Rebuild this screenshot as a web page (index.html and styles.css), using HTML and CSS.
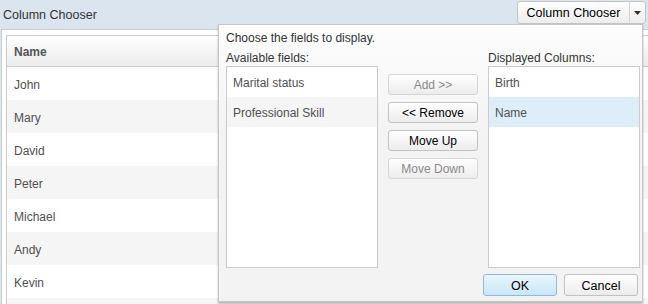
FILE: index.html
```html
<!DOCTYPE html>
<html>
<head>
    <title>Column Chooser</title>
    <link rel="stylesheet" href="styles.css">
</head>
<body>
    <div class="toolbar">
        <span class="toolbar-title">Column Chooser</span>
        <div class="split-btn">
            <span class="split-main">Column Chooser</span>
            <span class="split-arrow">
                <svg width="7" height="4" viewBox="0 0 7 4"><path d="M0 0h7L3.5 4z" fill="#333"></path></svg>
            </span>
        </div>
    </div>
    <div class="content">
        <div class="grid">
            <div class="grid-header">Name</div>
            <div class="grid-row">John</div>
            <div class="grid-row alt">Mary</div>
            <div class="grid-row">David</div>
            <div class="grid-row alt">Peter</div>
            <div class="grid-row">Michael</div>
            <div class="grid-row alt">Andy</div>
            <div class="grid-row">Kevin</div>
            <div class="grid-row alt"></div>
        </div>
    </div>

    <div class="chooser">
        <div class="chooser-intro">Choose the fields to display.</div>
        <div class="chooser-body">
            <div class="chooser-col">
                <div class="chooser-label">Available fields:</div>
                <div class="field-list">
                    <div class="field-item">Marital status</div>
                    <div class="field-item alt">Professional Skill</div>
                </div>
            </div>
            <div class="chooser-actions">
                <button class="btn" disabled>Add &gt;&gt;</button>
                <button class="btn">&lt;&lt; Remove</button>
                <button class="btn">Move Up</button>
                <button class="btn" disabled>Move Down</button>
            </div>
            <div class="chooser-col">
                <div class="chooser-label">Displayed Columns:</div>
                <div class="field-list">
                    <div class="field-item">Birth</div>
                    <div class="field-item selected">Name</div>
                </div>
            </div>
        </div>
        <div class="chooser-footer">
            <button class="btn dialog-btn primary">OK</button>
            <button class="btn dialog-btn">Cancel</button>
        </div>
    </div>
</body>
</html>
```

FILE: styles.css
```css
:root {
    --bar-color: #dae5f0;
    --border-color: #cccccc;
    --alt-row: #f5f5f5;
    --text-color: #333333;
    --cell-text: #505050;
    --disabled-text: #8a8a8a;
    --selected-bg: #ddeef9;
}
* {
    box-sizing: border-box;
}
body {
    margin: 0;
    font-family: "Liberation Sans", Arial, sans-serif;
    font-size: 12px;
    color: var(--text-color);
    background-color: var(--bar-color);
    height: 304px;
    overflow: hidden;
    position: relative;
}
.toolbar {
    height: 29px;
    display: flex;
    justify-content: space-between;
    padding: 0 2px 0 2px;
}
.toolbar-title {
    font-size: 12.5px;
    line-height: 31px;
    padding-left: 1px;
}
.split-btn {
    margin-top: 1px;
    height: 23px;
    display: flex;
    border: 1px solid #c4c4c4;
    border-radius: 3px;
    background: linear-gradient(#ffffff, #ededed);
    font-size: 12.5px;
    color: #000;
}
.split-main {
    width: 112px;
    line-height: 22px;
    text-align: center;
    border-right: 1px solid #d2d2d2;
}
.split-arrow {
    width: 15px;
    display: flex;
    align-items: center;
    justify-content: center;
}
.content {
    margin-left: 1px;
    height: 275px;
    overflow: hidden;
    border-top: 1px solid #c9cfd6;
    border-left: 1px solid #c9cfd6;
    background-color: #ffffff;
    padding: 5px 0 0 4px;
}
.grid {
    border: 1px solid var(--border-color);
    border-right: none;
}
.grid-header {
    height: 31px;
    padding-top: 2px;
    line-height: 29px;
    padding-left: 7px;
    font-weight: bold;
    color: #555;
    background: linear-gradient(#ffffff, #ececec);
    border-bottom: 1px solid var(--border-color);
}
.grid-row {
    height: 33px;
    padding-top: 3px;
    line-height: 30px;
    padding-left: 7px;
    color: var(--cell-text);
}
.grid-row.alt {
    background-color: var(--alt-row);
}

/* column chooser popup */
.chooser {
    position: absolute;
    left: 218px;
    top: 24px;
    width: 425px;
    height: 278px;
    border: 1px solid #c6c6c6;
    background: linear-gradient(#fdfdfd, #f3f3f3 40%);
    box-shadow: 0 2px 2px rgba(0, 0, 0, 0.25);
    padding: 6px 2px 0 7px;
}
.chooser-intro,
.chooser-label {
    line-height: 14px;
}
.chooser-label {
    margin: 6px 0 1px;
}
.chooser-body {
    display: grid;
    grid-template-columns: 152px 90px 152px;
    column-gap: 10px;
}
.field-list {
    height: 202px;
    border: 1px solid var(--border-color);
    background-color: #ffffff;
}
.field-item {
    height: 30px;
    padding-top: 3px;
    line-height: 27px;
    padding-left: 6px;
    color: var(--cell-text);
}
.field-item.alt {
    background-color: var(--alt-row);
}
.field-item.selected {
    background-color: var(--selected-bg);
}
.chooser-actions {
    padding-top: 29px;
    display: flex;
    flex-direction: column;
    gap: 7px;
}
.btn {
    height: 21px;
    padding: 1px 0 0;
    border: 1px solid #c2c2c2;
    border-radius: 3px;
    background: linear-gradient(#ffffff, #ececec);
    font-family: inherit;
    font-size: 12px;
    color: #000;
}
.btn:disabled {
    color: var(--disabled-text);
    border-color: #d6d6d6;
}
.chooser-footer {
    display: flex;
    justify-content: flex-end;
    gap: 7px;
    margin-top: 6px;
    padding-right: 2px;
}
.dialog-btn {
    width: 74px;
    height: 22px;
    padding-top: 2px;
    font-size: 12.5px;
}
.dialog-btn.primary {
    border-color: #8fb9dc;
    background: linear-gradient(#eaf6fd, #c9e6f7);
}
```
